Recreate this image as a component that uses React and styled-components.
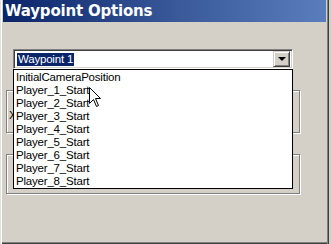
import React from 'react';
import styled, { createGlobalStyle } from 'styled-components';

const GlobalStyle = createGlobalStyle`
  html, body {
    margin: 0;
    padding: 0;
    background: #d4d0c8;
  }
`;

const Window = styled.div`
  position: relative;
  box-sizing: border-box;
  width: 329px;
  height: 244px;
  padding: 0 3px 2px 3px;
  background: #d4d0c8;
  display: flex;
  flex-direction: column;
  font-family: "Liberation Sans", Arial, sans-serif;
  box-shadow: inset 1px 0 0 #e4e2dc, inset 2px 0 0 #ffffff,
    inset -1px 0 0 #404040, inset -2px 0 0 #808080,
    inset 0 -1px 0 #404040, inset 0 -2px 0 #808080;
`;

const TitleBar = styled.div`
  height: 22px;
  flex-shrink: 0;
  display: flex;
  align-items: center;
  padding-left: 2px;
  background: linear-gradient(to right, #0a246a 0%, #3a5a9a 55%, #5a7dbd 100%);
  color: #fff;
  font-family: "DejaVu Sans", Verdana, sans-serif;
  font-weight: bold;
  font-size: 15px;
  letter-spacing: -0.2px;
`;

const Content = styled.div`
  display: flex;
  flex-direction: column;
  padding-top: 27px;
`;

const Combo = styled.div`
  position: relative;
  margin-left: 10px;
  width: 280px;
  height: 20px;
  box-sizing: border-box;
  background: #fff;
  border-top: 1px solid #808080;
  border-left: 1px solid #808080;
  border-right: 1px solid #ffffff;
  border-bottom: 1px solid #ffffff;
  box-shadow: inset 1px 1px 0 #404040, inset -1px -1px 0 #d4d0c8;
  display: flex;
  align-items: center;
  padding: 0 2px 0 3px;
`;

const Selected = styled.span`
  background: #0a246a;
  color: #fff;
  font-size: 11.5px;
  letter-spacing: -0.2px;
  line-height: 13px;
  padding: 0 1px;
`;

const DropButton = styled.div`
  margin-left: auto;
  width: 17px;
  height: 16px;
  box-sizing: border-box;
  background: #d4d0c8;
  border-top: 1px solid #d4d0c8;
  border-left: 1px solid #d4d0c8;
  border-right: 1px solid #404040;
  border-bottom: 1px solid #404040;
  box-shadow: inset 1px 1px 0 #fff, inset -1px -1px 0 #808080;
  display: flex;
  align-items: center;
  justify-content: center;
`;

const Arrow = styled.div`
  width: 0;
  height: 0;
  border-left: 4px solid transparent;
  border-right: 4px solid transparent;
  border-top: 4px solid #000;
`;

const List = styled.ul`
  position: absolute;
  z-index: 2;
  top: 19px;
  left: -1px;
  width: 280px;
  height: 120px;
  box-sizing: border-box;
  margin: 0;
  padding: 1px 0 0 0;
  list-style: none;
  background: #fff;
  border: 1px solid #000;
`;

const Item = styled.li`
  height: 13px;
  line-height: 13px;
  padding-left: 2px;
  font-size: 11.5px;
  letter-spacing: -0.2px;
  color: #000;
  white-space: nowrap;
`;

const Group = styled.div`
  margin-left: 3px;
  margin-top: ${p => p.$top}px;
  width: 290px;
  height: ${p => p.$height}px;
  box-sizing: content-box;
  border: 1px solid #808080;
  box-shadow: inset 1px 1px 0 #fff, 1px 1px 0 #fff;
  display: flex;
  align-items: center;
  padding-left: 2px;
  padding-top: ${p => p.$shift || 0}px;
  font-size: 11.5px;
`;

const Cursor = styled.svg`
  position: absolute;
  z-index: 3;
  left: 89px;
  top: 87px;
`;

const items = [
  'InitialCameraPosition',
  'Player_1_Start',
  'Player_2_Start',
  'Player_3_Start',
  'Player_4_Start',
  'Player_5_Start',
  'Player_6_Start',
  'Player_7_Start',
  'Player_8_Start',
];

export default function App() {
  return (
    <>
      <GlobalStyle />
      <Window>
        <TitleBar>Waypoint Options</TitleBar>
        <Content>
          <Combo>
            <Selected>Waypoint 1</Selected>
            <DropButton>
              <Arrow />
            </DropButton>
            <List>
              {items.map(name => (
                <Item key={name}>{name}</Item>
              ))}
            </List>
          </Combo>
          <Group $top={21} $height={35} $shift={6}>X</Group>
          <Group $top={21} $height={38} />
        </Content>
        <Cursor width="13" height="21" viewBox="0 0 13 21">
          <path
            d="M0.5 0.5 L0.5 16.5 L4.5 12.5 L7.5 19.5 L9.5 18.5 L6.5 11.5 L11.5 11.5 Z"
            fill="#fff"
            stroke="#000"
            strokeWidth="1"
          />
        </Cursor>
      </Window>
    </>
  );
}
